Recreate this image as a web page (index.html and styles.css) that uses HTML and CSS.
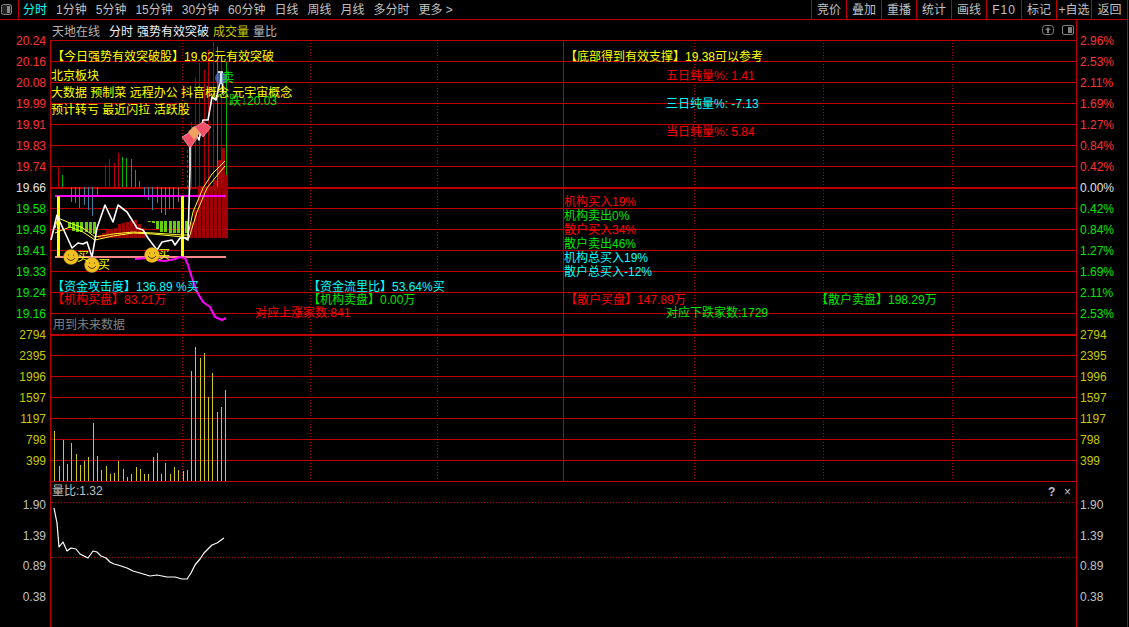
FILE: index.html
```html
<!DOCTYPE html>
<html lang="zh-CN">
<head>
<meta charset="utf-8">
<title>分时 强势有效突破</title>
<link rel="stylesheet" href="styles.css">
</head>
<body>
<div class="app">
  <header class="toolbar">
    <div class="logo">
      <svg width="13" height="13" viewBox="0 0 13 13"><rect x="1.5" y="1.5" width="10" height="10" rx="2" fill="#222" stroke="#888"/><rect x="7" y="3" width="3" height="7" fill="#888"/></svg>
    </div>
    <nav class="periods">
      <span class="period active">分时</span><span class="period">1分钟</span><span class="period">5分钟</span><span class="period">15分钟</span><span class="period">30分钟</span><span class="period">60分钟</span><span class="period">日线</span><span class="period">周线</span><span class="period">月线</span><span class="period">多分时</span><span class="period">更多 &gt;</span>
    </nav>
    <div class="tools">
      <span class="tool">竞价</span><span class="tool">叠加</span><span class="tool">重播</span><span class="tool">统计</span><span class="tool">画线</span><span class="tool spaced">F10</span><span class="tool">标记</span><span class="tool">+自选</span><span class="tool">返回</span>
    </div>
  </header>
  <main class="workspace">
    <aside class="axis axis-left">
      <div class="ticks">
        <span class="up">20.24</span><span class="up">20.16</span><span class="up">20.08</span><span class="up">19.99</span><span class="up">19.91</span><span class="up">19.83</span><span class="up">19.74</span><span class="flat">19.66</span><span class="down">19.58</span><span class="down">19.49</span><span class="down">19.41</span><span class="down">19.33</span><span class="down">19.24</span><span class="down">19.16</span>
        <span class="vol">2794</span><span class="vol">2395</span><span class="vol">1996</span><span class="vol">1597</span><span class="vol">1197</span><span class="vol">798</span><span class="vol">399</span>
      </div>
      <div class="ticks-sub"><span>1.90</span><span>1.39</span><span>0.89</span><span>0.38</span></div>
    </aside>
    <section class="chart">
      <div class="legend">
        <span class="legend-name">天地在线</span><span class="legend-main first">分时</span><span class="legend-main">强势有效突破</span><span class="legend-vol">成交量</span><span class="legend-ratio">量比</span>
      </div>
      <svg class="canvas" viewBox="50 20 1027 607" width="1027" height="607">
        <g class="grid">
          <path d="M51 40.5H1076M51 61.5H1076M51 82.5H1076M51 103.5H1076M51 124.5H1076M51 145.5H1076M51 166.5H1076M51 208.5H1076M51 229.5H1076M51 250.5H1076M51 271.5H1076M51 292.5H1076M51 313.5H1076M51 355.5H1076M51 376.5H1076M51 397.5H1076M51 418.5H1076M51 439.5H1076M51 460.5H1076M51 481.5H1076M563.5 40V481"/>
          <path class="thick" d="M51 188H1076M51 335H1076"/>
          <path class="frame" d="M50.5 40V627M1076.5 20V627"/>
          <path class="dots" d="M182.5 40V481M310.5 40V481M437.5 40V481M694.5 40V481M823.5 40V481M952.5 40V481M52 502.5H1076M52 557.5H1076"/>
        </g>

        <g class="crisp">
          <path class="bar-red" d="M58.5 167V187M105.5 165V187M109.5 159V187M114.5 163V187M118.5 153V187M191.5 122V187M195.5 77V187M199.5 63V187M204.5 70V187M208.5 50V187M213.5 42V187M221.5 60V187"/>
          <path class="bar-green" d="M62.5 175V187M122.5 157V187M126.5 158V187M131.5 159V187M135.5 170V187M139.5 181V187M217.5 47V187M226.5 62V187"/>
          <path class="bar-blue" d="M71.5 187V202M75.5 187V203M79.5 187V208M84.5 187V205M88.5 187V210M92.5 187V216M144.5 187V197M148.5 187V200M152.5 187V210M157.5 187V203"/>
          <path class="bar-brown" d="M97.5 187V195M161.5 187V213M165.5 187V215M169.5 187V209M173.5 187V209M178.5 187V202"/>
          <path class="wide-green" d="M69.5 222V228M73.5 222V231M77.5 222V232M81.5 222V232M86.5 222V232M90.5 222V233M94.5 222V234M149.5 221V222M153.5 221V223M157.5 221V229M161.5 221V232M165.5 221V232M170.5 221V233M174.5 221V233M178.5 221V233M182.5 221V233M186.5 221V233"/>
          <path class="wide-red" d="M99.5 238V235M103.5 238V233M107.5 238V230M111.5 238V229M115.5 238V228M119.5 238V224M123.5 238V223M127.5 238V222M131.5 238V221M135.5 238V220M139.5 238V224M143.5 238V228M191.5 238V222M195.5 238V210M199.5 238V186M203.5 238V186M207.5 238V186M211.5 238V186M215.5 238V180M219.5 238V160M223.5 238V148M226.5 238V175"/>
          <path class="vol-bars" d="M54.5 481V431M59.5 481V466M63.5 481V440M67.5 481V464M71.5 481V443M76.5 481V454M80.5 481V465M84.5 481V461M88.5 481V457M93.5 481V423M97.5 481V456M101.5 481V470M106.5 481V466M110.5 481V474M114.5 481V473M118.5 481V461M123.5 481V469M127.5 481V477M131.5 481V474M136.5 481V467M140.5 481V469M144.5 481V474M148.5 481V474M153.5 481V457M157.5 481V453M161.5 481V474M165.5 481V463M170.5 481V474M174.5 481V467M178.5 481V470M183.5 481V471M187.5 481V470M191.5 481V371M195.5 481V347M200.5 481V358M204.5 481V353M208.5 481V397M212.5 481V373M217.5 481V412M221.5 481V407M225.5 481V390"/>
          <path class="band-magenta" d="M55 196H226"/>
          <path class="band-pink" d="M55 257H226"/>
          <path class="band-yellow" d="M58.5 196V257M182.5 196V257"/>
          <path class="red-dash" d="M187.5 150V188"/>
        </g>

        <polyline class="ma" points="55,228 58,218 70,223 83,228 95,237 113,234 133,232 153,233 183,235 188,235 193,212 203,188 212,174 225,161"/>
        <polyline class="ma" points="55,233 70,227 83,232 95,240 113,236 133,233 153,234 183,237 189,238 197,212 207,188 215,178 225,166"/>
        <polyline class="price" points="51,240 57,215 60,222 67,237 72,248 78,243 83,244 87,242 92,257 97,228 105,205 113,222 118,205 127,212 137,228 143,230 148,238 157,250 162,242 172,240 175,245 180,238 185,238 188,240 190,170 190,140 193,128 199,140 203,120 208,120 212,97 216,100 222,73 223,93"/>
        <polyline class="capital" points="135,259 147,258 155,260 165,261 175,259 180,257 185,258 188,265 192,278 197,292 203,302 210,307 215,317 222,320 226,318"/>
        <polyline class="ratio" points="54,508 57,523 59,547 63,542 67,551 71,548 76,549 80,554 88,558 93,551 97,552 101,556 106,558 110,562 114,564 118,565 127,568 133,571 140,573 150,576 157,575 167,577 175,577 182,579 187,579 191,573 195,565 200,559 204,553 212,545 217,543 224,538"/>

        <g class="gem">
          <polygon class="gem-red" points="182,137 190,132 198,137 190,148"/>
          <polygon class="gem-orange" points="188,132 194,126 201,132 194,140"/>
          <polygon class="gem-red" points="195,127 203,122 211,127 203,137"/>
        </g>
        <circle class="blob" cx="221" cy="78" r="6"/>
        <path class="blob-mark" d="M221 73V84M218 72H223"/>

        <g class="smiley">
          <circle cx="71" cy="257" r="7.5"/><path d="M67 258q4 5 8 0M68 255h1M73 255h1"/>
          <circle cx="92" cy="265" r="7.5"/><path d="M88 266q4 5 8 0M89 263h1M94 263h1"/>
          <circle cx="152" cy="255" r="7.5"/><path d="M148 256q4 5 8 0M149 253h1M154 253h1"/>
        </g>
        <text class="t yellow" x="77" y="261">买</text>
        <text class="t yellow" x="98" y="269">买</text>
        <text class="t yellow" x="158" y="259">买</text>

        <text class="t yellow" x="52" y="61">【今日强势有效突破股】19.62元有效突破</text>
        <text class="t yellow" x="51" y="80">北京板块</text>
        <text class="t yellow" x="51" y="97">大数据 预制菜 远程办公 抖音概念 元宇宙概念</text>
        <text class="t yellow" x="51" y="114">预计转亏 最近闪拉 活跃股</text>
        <text class="t green" x="222" y="82">卖</text>
        <text class="t green" x="229" y="105">跌↓20.03</text>

        <text class="t yellow" x="565" y="61">【底部得到有效支撑】19.38可以参考</text>
        <text class="t red" x="666" y="80">五日纯量%: 1.41</text>
        <text class="t cyan" x="666" y="108">三日纯量%: -7.13</text>
        <text class="t red" x="666" y="136">当日纯量%: 5.84</text>

        <text class="t red" x="564" y="206">机构买入19%</text>
        <text class="t green" x="564" y="220">机构卖出0%</text>
        <text class="t red" x="564" y="234">散户买入34%</text>
        <text class="t green" x="564" y="248">散户卖出46%</text>
        <text class="t cyan" x="564" y="262">机构总买入19%</text>
        <text class="t cyan" x="564" y="276">散户总买入-12%</text>

        <text class="t cyan" x="52" y="291">【资金攻击度】136.89 %买</text>
        <text class="t red" x="52" y="304">【机构买盘】83.21万</text>
        <text class="t cyan" x="308" y="291">【资金流里比】53.64%买</text>
        <text class="t green" x="308" y="304">【机构卖盘】0.00万</text>
        <text class="t red" x="565" y="304">【散户买盘】147.89万</text>
        <text class="t green" x="816" y="304">【散户卖盘】198.29万</text>
        <text class="t red" x="255" y="317">对应上涨家数:841</text>
        <text class="t green" x="666" y="317">对应下跌家数:1729</text>
        <text class="t gray" x="53" y="329">用到未来数据</text>
        <text class="t silver" x="52" y="495">量比:1.32</text>

        <g class="panel-icon">
          <rect x="1042.5" y="25.5" width="11" height="9" rx="3"/>
          <path class="panel-fill" d="M1048 27l3 3h-2v3h-2v-3h-2z"/>
          <rect x="1062.5" y="25.5" width="11" height="9" rx="1.5"/>
          <rect class="panel-fill" x="1068" y="27" width="4" height="6"/>
        </g>
        <text class="t help" x="1048" y="496">?</text>
        <text class="t silver" x="1064" y="496">×</text>
      </svg>
    </section>
    <aside class="axis axis-right">
      <div class="ticks">
        <span class="up">2.96%</span><span class="up">2.53%</span><span class="up">2.11%</span><span class="up">1.69%</span><span class="up">1.27%</span><span class="up">0.84%</span><span class="up">0.42%</span><span class="flat">0.00%</span><span class="down">0.42%</span><span class="down">0.84%</span><span class="down">1.27%</span><span class="down">1.69%</span><span class="down">2.11%</span><span class="down">2.53%</span>
        <span class="vol">2794</span><span class="vol">2395</span><span class="vol">1996</span><span class="vol">1597</span><span class="vol">1197</span><span class="vol">798</span><span class="vol">399</span>
      </div>
      <div class="ticks-sub"><span>1.90</span><span>1.39</span><span>0.89</span><span>0.38</span></div>
    </aside>
  </main>
</div>
</body>
</html>
```
FILE: styles.css
```css
* { box-sizing: border-box; }
html, body { margin: 0; height: 100%; background: #000; overflow: hidden; }
body { font: 12px/1 "Liberation Sans", "Noto Sans CJK SC", sans-serif; color: #c0c0c0; }
.app { width: 1128px; height: 627px; display: flex; flex-direction: column; border-right: 1px solid #c00000; }

.toolbar { height: 20px; flex: none; display: flex; align-items: stretch; border-bottom: 1px solid #c00000; }
.logo { width: 19px; flex: none; display: flex; align-items: center; border-right: 1px solid #c00000; }
.periods { display: flex; align-items: center; gap: 9px; padding-left: 4px; flex: 1; }
.period { white-space: nowrap; }
.active { color: #00ffff; }
.tools { display: flex; flex: none; }
.tool { width: 35px; display: flex; align-items: center; justify-content: center; border-left: 1px solid #c00000; white-space: nowrap; }
.tool:last-child { width: 36px; }
.spaced { letter-spacing: 1px; }

.workspace { flex: 1; display: flex; min-height: 0; }
.axis { flex: none; display: flex; flex-direction: column; }
.axis-left { width: 50px; text-align: right; padding-right: 4px; }
.axis-right { width: 50px; text-align: left; padding-left: 3px; }
.ticks { padding-top: 11px; display: flex; flex-direction: column; }
.ticks span { height: 21px; line-height: 21px; }
.ticks-sub { margin-top: 18px; display: flex; flex-direction: column; color: #c0c0c0; }
.ticks-sub span { height: 30.67px; line-height: 30.67px; }
.up { color: #ff3232; }
.down { color: #00e600; }
.flat { color: #e0e0e0; }
.vol { color: #c8c800; }

.chart { position: relative; width: 1027px; flex: none; }
.legend { display: flex; align-items: center; height: 24px; padding-left: 2px; gap: 4px; position: relative; z-index: 1; }
.legend-name { color: #b4b4b4; }
.legend-main { color: #f0f0f0; }
.legend-main.first { margin-left: 5px; }
.legend-vol { color: #c8c800; }
.legend-ratio { color: #b4b4b4; }
.canvas { position: absolute; left: 0; top: 0; display: block; }

.grid path { fill: none; stroke: #c00000; stroke-width: 1; shape-rendering: crispEdges; }
.grid .thick { stroke-width: 2; }
.grid .dots { stroke-dasharray: 1 2; }
.crisp path { fill: none; shape-rendering: crispEdges; stroke-width: 1; }
.bar-red { stroke: #b00000; }
.bar-green { stroke: #00b400; }
.bar-blue { stroke: #3a7f9f; }
.bar-brown { stroke: #9a6464; }
.crisp .wide-green { stroke: #66cc11; stroke-width: 3; }
.crisp .wide-red { stroke: #a00000; stroke-width: 3; }
.vol-bars { stroke: #d2c81e; }
.crisp .band-magenta { stroke: #ff00ff; stroke-width: 2; }
.crisp .band-pink { stroke: #ff8888; stroke-width: 2; }
.crisp .band-yellow { stroke: #ffff00; stroke-width: 3; }
.crisp .red-dash { stroke: #ff0000; stroke-dasharray: 3 2; }

polyline { fill: none; stroke-linejoin: round; }
.ma { stroke: #ffff33; stroke-width: 1; }
.price { stroke: #fff; stroke-width: 1.6; }
.capital { stroke: #ff00ff; stroke-width: 2; }
.ratio { stroke: #fff; stroke-width: 1.2; }

.gem-red { fill: #f0506a; stroke: #ffb0b8; stroke-width: 0.7; }
.gem-orange { fill: #f0a060; }
.blob { fill: #5070c8; opacity: 0.8; }
.blob-mark { fill: none; stroke: #fff; stroke-width: 1.5; }
.smiley circle { fill: #f0c020; stroke: #b08010; stroke-width: 0.5; }
.smiley path { fill: none; stroke: #5a3c00; stroke-width: 1; }

.t { font-size: 12px; font-family: "Liberation Sans", "Noto Sans CJK SC", sans-serif; }
.yellow { fill: #ffff00; }
.red { fill: #ff0000; }
.green { fill: #00e600; }
.cyan { fill: #00ffff; }
.gray { fill: #808080; }
.silver { fill: #c0c0c0; }
.help { fill: #c0c0c0; font-weight: 700; }
.panel-icon rect { fill: none; stroke: #808080; }
.panel-icon .panel-fill { fill: #808080; stroke: none; }
```
